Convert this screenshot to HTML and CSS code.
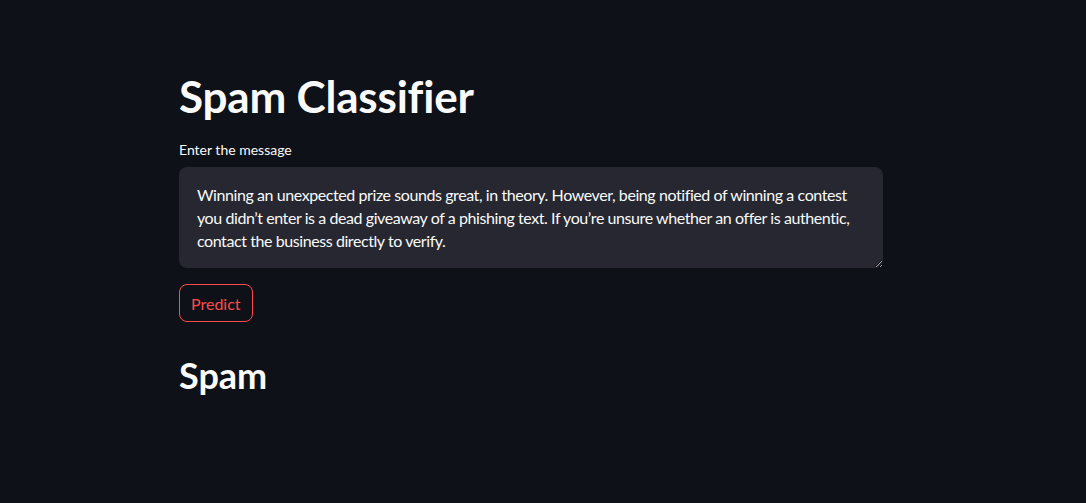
FILE: index.html
```html
<!DOCTYPE html>
<html lang="en">
<head>
<meta charset="utf-8">
<title>Spam Classifier</title>
<link rel="stylesheet" href="styles.css">
</head>
<body>
<main class="app">
  <section class="block">
    <h1 class="title">Spam Classifier</h1>
    <div class="field">
      <label class="label" for="msg">Enter the message</label>
      <textarea id="msg" class="input">Winning an unexpected prize sounds great, in theory. However, being notified of winning a contest you didn’t enter is a dead giveaway of a phishing text. If you’re unsure whether an offer is authentic, contact the business directly to verify.</textarea>
    </div>
    <button class="btn" type="button">Predict</button>
    <h2 class="result">Spam</h2>
  </section>
</main>
</body>
</html>
```
FILE: styles.css
```css
* { box-sizing: border-box; }
html, body {
  margin: 0;
  padding: 0;
  background: #0e1117;
  color: #fafafa;
  font-family: "Lato", "Open Sans", sans-serif;
  height: 100%;
}
.app {
  display: flex;
  justify-content: flex-start;
  padding: 0 0 0 179px;
}
.block {
  width: 704px;
  display: flex;
  flex-direction: column;
  align-items: flex-start;
  padding-top: 70px;
}
.title {
  margin: 0;
  font-size: 44px;
  font-weight: 700;
  line-height: 52px;
  letter-spacing: -0.2px;
}
.field {
  width: 100%;
  display: flex;
  flex-direction: column;
  margin-top: 18px;
}
.label {
  font-size: 14px;
  line-height: 20px;
  margin-bottom: 7px;
}
.input {
  width: 100%;
  height: 101px;
  background: #262730;
  color: #fafafa;
  border: none;
  border-radius: 8px;
  padding: 16px 18px;
  font-family: "Lato", "Open Sans", sans-serif;
  font-size: 16px;
  line-height: 23px;
  letter-spacing: -0.42px;
  resize: vertical;
  outline: none;
}
.btn {
  margin-top: 16px;
  height: 38px;
  padding: 0 11px;
  background: #0e1117;
  border: 1px solid #ff4b4b;
  border-radius: 8px;
  color: #ff4b4b;
  font-family: "Lato", "Open Sans", sans-serif;
  font-size: 16px;
}
.result {
  margin: 31px 0 0;
  font-size: 36px;
  font-weight: 700;
  line-height: 44px;
}
```
